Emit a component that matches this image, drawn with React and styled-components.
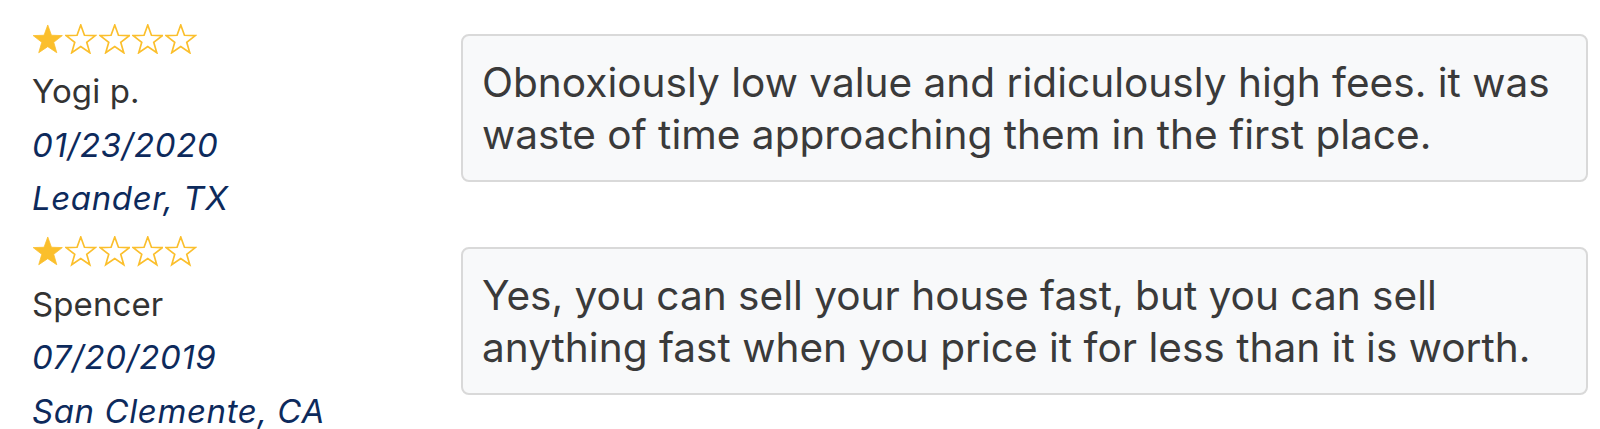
import React from "react";
import styled, { createGlobalStyle } from "styled-components";

const GlobalStyle = createGlobalStyle`
  html, body { margin: 0; padding: 0; background: #ffffff; }
  body { font-family: "Inter", "Noto Sans", sans-serif; }
`;

const Page = styled.div`
  padding: 13px 12px 0 32px;
  display: flex;
  flex-direction: column;
`;

const ReviewRow = styled.div`
  display: grid;
  grid-template-columns: 429px 1fr;
  align-items: start;
`;

const Meta = styled.div`
  display: flex;
  flex-direction: column;
`;

const Stars = styled.div`
  height: 52px;
  display: flex;
  align-items: center;
  gap: 1.8px;
`;

const Line = styled.div`
  height: 53.5px;
  line-height: 53.5px;
  font-size: 33px;
  white-space: nowrap;
  color: ${p => (p.$accent ? "#0d2a5c" : "#333333")};
  font-style: ${p => (p.$accent ? "italic" : "normal")};
  letter-spacing: ${p => (p.$accent ? "0.6px" : "0.1px")};
`;

const Bubble = styled.div`
  margin-top: 21px;
  background: #f8f9fa;
  border: 2px solid #d9d9d9;
  border-radius: 8px;
  padding: 21px 18px 19px 19px;
  font-size: 40.6px;
  line-height: 52px;
  color: #3a3a3a;
`;

const STAR_POINTS = (() => {
  const pts = [];
  const cx = 16, cy = 16.6, R = 15.6, r = 6.4;
  for (let i = 0; i < 10; i++) {
    const a = (-90 + i * 36) * Math.PI / 180;
    const rad = i % 2 === 0 ? R : r;
    pts.push(`${(cx + rad * Math.cos(a)).toFixed(2)},${(cy + rad * Math.sin(a)).toFixed(2)}`);
  }
  return pts.join(" ");
})();

function Star({ filled }) {
  return (
    <svg width="31.5" height="30.5" viewBox="0 0 32 31" aria-hidden="true">
      <polygon
        points={STAR_POINTS}
        fill={filled ? "#fbbf2c" : "none"}
        stroke="#fbbf2c"
        strokeWidth={filled ? 0.8 : 1.7}
        strokeLinejoin="miter"
      />
    </svg>
  );
}

const reviews = [
  {
    rating: 1,
    name: "Yogi p.",
    date: "01/23/2020",
    place: "Leander, TX",
    text: "Obnoxiously low value and ridiculously high fees. it was waste of time approaching them in the first place.",
  },
  {
    rating: 1,
    name: "Spencer",
    date: "07/20/2019",
    place: "San Clemente, CA",
    text: "Yes, you can sell your house fast, but you can sell anything fast when you price it for less than it is worth.",
  },
];

export default function App() {
  return (
    <>
      <GlobalStyle />
      <Page>
        {reviews.map((r) => (
          <ReviewRow key={r.name}>
            <Meta>
              <Stars>
                {[0, 1, 2, 3, 4].map((i) => (
                  <Star key={i} filled={i < r.rating} />
                ))}
              </Stars>
              <Line>{r.name}</Line>
              <Line $accent>{r.date}</Line>
              <Line $accent>{r.place}</Line>
            </Meta>
            <Bubble>{r.text}</Bubble>
          </ReviewRow>
        ))}
      </Page>
    </>
  );
}
